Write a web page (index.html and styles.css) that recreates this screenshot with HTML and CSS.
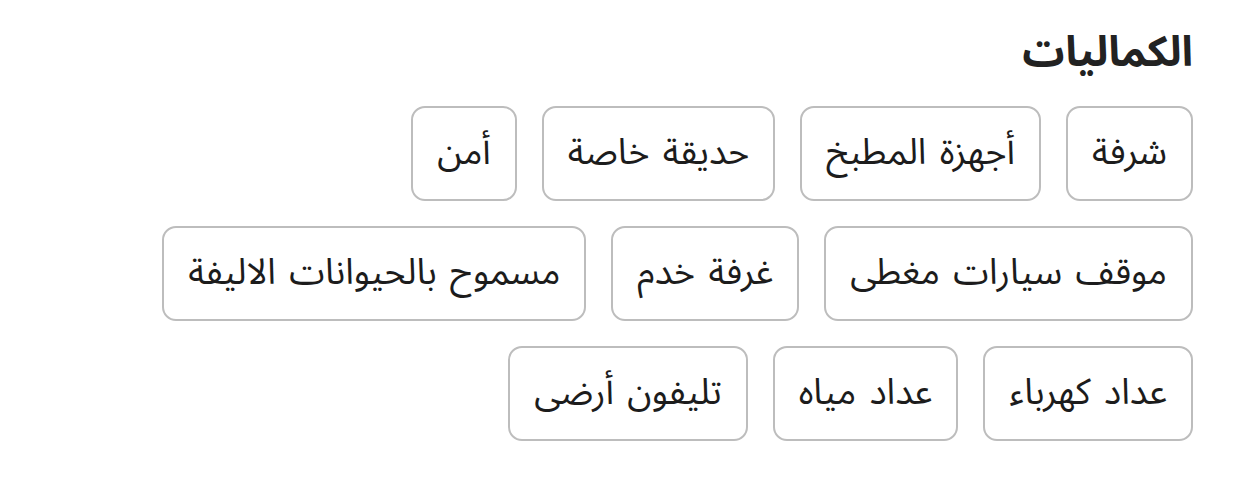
FILE: index.html
```html
<!DOCTYPE html>
<html lang="ar" dir="rtl">
<head><meta charset="utf-8"><title>الكماليات</title><link rel="stylesheet" href="styles.css"></head>
<body>
<section class="amenities">
  <h2 class="amenities-title">الكماليات</h2>
  <div class="chip-rows">
    <ul class="chip-row">
      <li class="chip">شرفة</li>
      <li class="chip">أجهزة المطبخ</li>
      <li class="chip">حديقة خاصة</li>
      <li class="chip">أمن</li>
    </ul>
    <ul class="chip-row">
      <li class="chip">موقف سيارات مغطى</li>
      <li class="chip">غرفة خدم</li>
      <li class="chip">مسموح بالحيوانات الاليفة</li>
    </ul>
    <ul class="chip-row">
      <li class="chip">عداد كهرباء</li>
      <li class="chip">عداد مياه</li>
      <li class="chip">تليفون أرضى</li>
    </ul>
  </div>
</section>
</body>
</html>
```
FILE: styles.css
```css
html, body {
  margin: 0;
  background: #ffffff;
}
body {
  font-family: "Noto Sans Arabic", "DejaVu Sans", sans-serif;
  color: #1c1c1c;
}
.amenities {
  padding: 22px 49px 0 49px;
}
.amenities-title {
  margin: 0 0 22px 0;
  font-size: 42px;
  line-height: 62px;
  font-weight: 700;
  color: #222222;
}
.chip-rows {
  display: flex;
  flex-direction: column;
  gap: 25px;
}
.chip-row {
  list-style: none;
  margin: 0;
  padding: 0;
  display: flex;
  gap: 25px;
}
.chip {
  border: 2px solid #bdbdbd;
  border-radius: 14px;
  padding: 22px 24px;
  font-size: 36px;
  line-height: 47px;
  word-spacing: 4px;
  white-space: nowrap;
}
```
